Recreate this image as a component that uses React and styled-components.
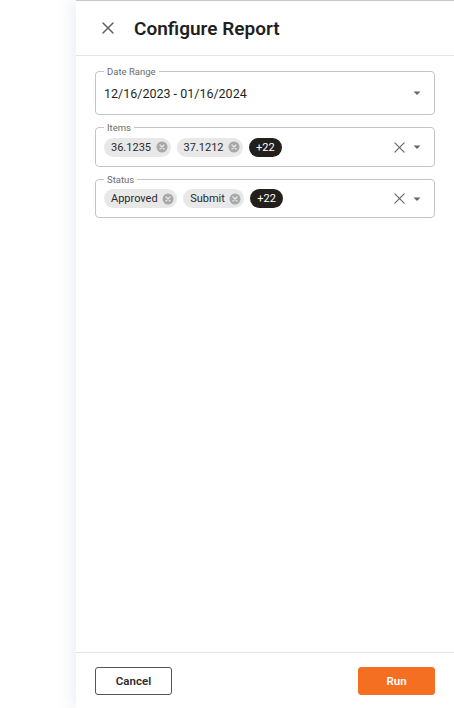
import React from "react";
import styled, { createGlobalStyle } from "styled-components";

const Global = createGlobalStyle`
  html, body { margin: 0; padding: 0; background: #ffffff; }
  body { font-family: Roboto, "Noto Sans", sans-serif; color: #212121; }
  #root { height: 708px; }
`;

const Page = styled.div`
  display: flex;
  height: 708px;
  width: 454px;
  overflow: hidden;
  background: #ffffff;
`;

const Backdrop = styled.div`
  width: 76px;
  flex: 0 0 76px;
  background: #ffffff;
`;

const Drawer = styled.div`
  flex: 1;
  display: flex;
  flex-direction: column;
  background: #ffffff;
  border-top: 1px solid #c9c9c9;
  box-shadow: -6px 0 14px rgba(120, 140, 170, 0.12);
  position: relative;
  z-index: 1;
`;

const Header = styled.div`
  height: 54px;
  display: flex;
  align-items: center;
  gap: 14px;
  padding: 0 20px;
  border-bottom: 1px solid #e3e3e3;
`;

const IconButton = styled.button`
  display: flex;
  align-items: center;
  justify-content: center;
  width: 24px;
  height: 24px;
  padding: 0;
  margin: 0;
  background: none;
  border: none;
  color: #616161;
  cursor: pointer;
`;

const Title = styled.h1`
  margin: 0;
  font-size: 19px;
  font-weight: 600;
  color: #1f1f1f;
  letter-spacing: 0;
`;

const Body = styled.div`
  flex: 1;
  display: flex;
  flex-direction: column;
  gap: 12px;
  padding: 15px 19px;
`;

const Field = styled.div`
  position: relative;
  box-sizing: border-box;
  height: ${(p) => p.$h}px;
  border: 1px solid #c4c4c4;
  border-radius: 4px;
  padding: 0 8px;
  display: flex;
  align-items: center;
`;

const Label = styled.span`
  position: absolute;
  top: -6px;
  left: 8px;
  padding: 0 3px;
  background: #ffffff;
  font-size: 9.5px;
  line-height: 11px;
  color: #6b6b6b;
`;

const Value = styled.div`
  flex: 1;
  font-size: 12.5px;
  color: #1f1f1f;
`;

const Chips = styled.div`
  flex: 1;
  display: flex;
  gap: 6px;
  align-items: center;
`;

const Chip = styled.span`
  display: inline-flex;
  align-items: center;
  gap: 4.5px;
  height: 19px;
  padding: 0 3px 0 7px;
  border-radius: 10px;
  background: #e8e8e8;
  font-size: 11px;
  color: #2a2a2a;
`;

const CountChip = styled.span`
  display: inline-flex;
  align-items: center;
  height: 19px;
  padding: 0 7px;
  border-radius: 10px;
  background: #231f1c;
  color: #ffffff;
  font-size: 11px;
`;

const Adornments = styled.div`
  display: flex;
  align-items: center;
  gap: 6px;
  margin-right: 4px;
  color: #6a6a6a;
`;

const Footer = styled.div`
  height: 55px;
  border-top: 1px solid #e3e3e3;
  display: flex;
  align-items: center;
  justify-content: space-between;
  padding: 0 19px;
`;

const Button = styled.button`
  width: 77px;
  height: 28px;
  box-sizing: border-box;
  border-radius: 3px;
  font-family: Roboto, sans-serif;
  font-size: 11.5px;
  font-weight: 600;
  cursor: pointer;
  border: 1px solid ${(p) => (p.$primary ? "#f46f22" : "#555555")};
  background: ${(p) => (p.$primary ? "#f46f22" : "#ffffff")};
  color: ${(p) => (p.$primary ? "#ffffff" : "#2b2b2b")};
`;

const CloseIcon = ({ size = 14, color = "currentColor", w = 1.4 }) => (
  <svg width={size} height={size} viewBox="0 0 14 14" fill="none">
    <path d="M2 2 L12 12 M12 2 L2 12" stroke={color} strokeWidth={w} strokeLinecap="round" />
  </svg>
);

const Caret = () => (
  <svg width="10" height="10" viewBox="0 0 10 10">
    <path d="M1.5 3.5 L8.5 3.5 L5 7 Z" fill="#666666" />
  </svg>
);

const ChipDelete = () => (
  <svg width="12" height="12" viewBox="0 0 12 12">
    <circle cx="6" cy="6" r="5.5" fill="#a8a8a8" />
    <path d="M4 4 L8 8 M8 4 L4 8" stroke="#e8e8e8" strokeWidth="1.2" strokeLinecap="round" />
  </svg>
);

const MultiField = ({ label, chips, h }) => (
  <Field $h={h}>
    <Label>{label}</Label>
    <Chips>
      {chips.map((c) => (
        <Chip key={c}>
          {c}
          <ChipDelete />
        </Chip>
      ))}
      <CountChip>+22</CountChip>
    </Chips>
    <Adornments>
      <CloseIcon size={13} w={1.3} />
      <Caret />
    </Adornments>
  </Field>
);

export default function App() {
  return (
    <>
      <Global />
      <Page>
        <Backdrop />
        <Drawer>
          <Header>
            <IconButton aria-label="Close">
              <CloseIcon size={14} w={1.5} />
            </IconButton>
            <Title>Configure Report</Title>
          </Header>
          <Body>
            <Field $h={44}>
              <Label>Date Range</Label>
              <Value>12/16/2023 - 01/16/2024</Value>
              <Adornments>
                <Caret />
              </Adornments>
            </Field>
            <MultiField label="Items" h={40} chips={["36.1235", "37.1212"]} />
            <MultiField label="Status" h={39} chips={["Approved", "Submit"]} />
          </Body>
          <Footer>
            <Button>Cancel</Button>
            <Button $primary>Run</Button>
          </Footer>
        </Drawer>
      </Page>
    </>
  );
}
